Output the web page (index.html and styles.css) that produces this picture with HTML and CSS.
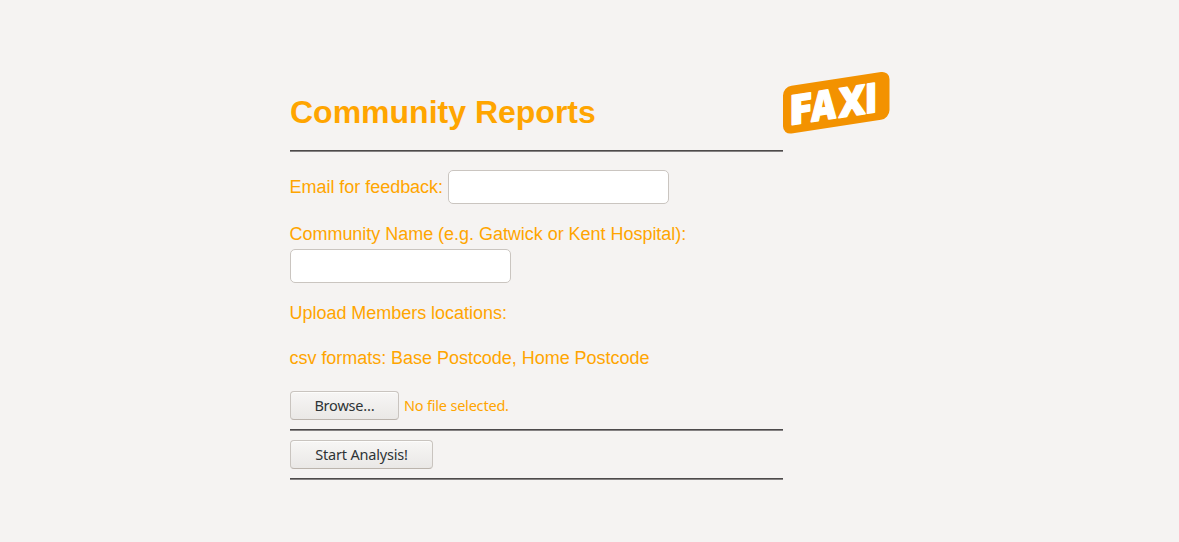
FILE: index.html
```html
<!DOCTYPE html>
<html lang="en">
<head>
<meta charset="utf-8">
<title>Community Reports</title>
<link rel="stylesheet" href="styles.css">
</head>
<body>
<main class="page">
  <form class="report-form">
    <h1 class="title"><span>Community Reports</span></h1>
    <div class="rule"></div>
    <div class="row email-row">
      <label for="email">Email for feedback:</label>
      <input class="field" id="email" type="text">
    </div>
    <div class="community-row">
      <label for="community">Community Name (e.g. Gatwick or Kent Hospital):</label>
      <input class="field" id="community" type="text">
    </div>
    <p class="upload-label"><span>Upload Members locations:</span></p>
    <p class="format-label"><span>csv formats: Base Postcode, Home Postcode</span></p>
    <div class="row file-row">
      <button class="button browse" type="button"><span>Browse…</span></button>
      <span class="file-status">No file selected.</span>
    </div>
    <div class="rule"></div>
    <button class="button start" type="button"><span>Start Analysis!</span></button>
    <div class="rule"></div>
  </form>
  <svg class="logo" width="107" height="65" viewBox="0 0 107 65" role="img" aria-label="FAXI">
    <g transform="matrix(1 -0.153 0 1 0 17)">
      <rect x="0" y="0" width="106.5" height="47.8" rx="8.5" fill="#f39200"/>
      <g class="logo-text">
        <text transform="translate(6 39.2) scale(1.05 1)">F</text>
        <text transform="translate(28.3 39.2) scale(.83 1)">A</text>
        <text transform="translate(55.8 39.2) scale(.9 1)">X</text>
        <text transform="translate(81.8 39.2) scale(.88 1)">I</text>
      </g>
    </g>
  </svg>
</main>
</body>
</html>
```
FILE: styles.css
```css
* { box-sizing: border-box; }

body {
  margin: 0;
  background: #f5f3f2;
  color: orange;
  font-family: "Liberation Sans", Arial, sans-serif;
  font-size: 18px;
  line-height: 22px;
}

.page {
  display: flex;
  align-items: flex-start;
  padding: 70px 0 0 290px;
}

.report-form { width: 493px; padding-top: 23px; }

.title {
  height: 57px;
  margin: 0;
  font-size: 32px;
  line-height: 38px;
  white-space: nowrap;
}

.rule {
  height: 2px;
  border-top: 1px solid #4d4a4b;
  border-bottom: 1px solid #858283;
}

.row { display: flex; align-items: center; gap: 5px; }

.email-row { margin-top: 18px; }

label, .upload-label, .format-label {
  letter-spacing: -0.03px;
  text-indent: -0.5px;
}

.email-row label { margin-right: -0.5px; }

.field {
  width: 221px;
  height: 34px;
  margin: 0;
  border: 1px solid #cac5c0;
  border-radius: 5px;
  background: #fff;
}

.community-row {
  display: flex;
  flex-direction: column;
  align-items: flex-start;
  gap: 4px;
  margin-top: 19px;
}

.upload-label { margin: 19px 0 0; }
.format-label { margin: 23px 0 0; }
.file-row { margin-top: 22px; margin-bottom: 9px; }

.button {
  display: block;
  height: 29px;
  padding: 0 0 2px;
  border: 1px solid #c9c4bf;
  border-bottom-color: #bbb4ad;
  border-radius: 4px;
  background: linear-gradient(#f7f6f5, #eae8e6);
  box-shadow: inset 0 1px #fdfdfc;
  color: #2e3436;
}

.button, .file-status {
  font: 14.5px/20px "Noto Sans", sans-serif;
  letter-spacing: -0.2px;
}

.browse { width: 109px; }
.start { width: 143px; margin: 9px 0; }
.file-status { padding-bottom: 2px; }

.logo { display: block; overflow: visible; }
.logo-text {
  fill: #fff;
  stroke: #fff;
  stroke-width: 1.5px;
  stroke-linejoin: round;
  font-family: "Open Sans", sans-serif;
  font-size: 41px;
  line-height: 1;
  font-weight: 800;
}
```
